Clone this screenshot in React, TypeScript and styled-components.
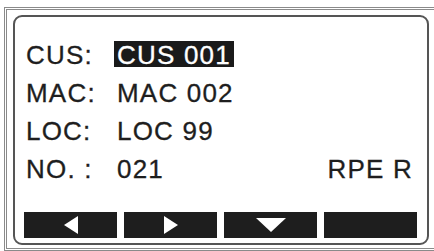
import styled, { createGlobalStyle } from 'styled-components';

const GlobalStyle = createGlobalStyle`
  html, body {
    margin: 0;
    padding: 0;
    background: #fff;
  }
  body {
    font-family: 'Liberation Sans', Arial, sans-serif;
  }
`;

const rows = [
  { label: 'CUS:', value: 'CUS 001', selected: true },
  { label: 'MAC:', value: 'MAC 002' },
  { label: 'LOC:', value: 'LOC 99' },
  { label: 'NO. :', value: '021', extra: 'RPE R' },
];

type Arrow = 'left' | 'right' | 'down' | null;
const keys: Arrow[] = ['left', 'right', 'down', null];

const ArrowIcon = ({ dir }: { dir: Arrow }) => {
  if (dir === 'left')
    return (
      <svg width="16" height="18" viewBox="0 0 16 18">
        <polygon points="15,0 15,18 1,9" fill="#fff" />
      </svg>
    );
  if (dir === 'right')
    return (
      <svg width="16" height="18" viewBox="0 0 16 18">
        <polygon points="1,0 1,18 15,9" fill="#fff" />
      </svg>
    );
  if (dir === 'down')
    return (
      <svg width="30" height="14" viewBox="0 0 30 14">
        <polygon points="0,0 30,0 15,14" fill="#fff" />
      </svg>
    );
  return null;
};

const App = () => (
  <>
    <GlobalStyle />
    <Frame>
      <Screen>
        <Rows>
          {rows.map((r) => (
            <Row key={r.label}>
              <Label>{r.label}</Label>
              <Value selected={r.selected}>{r.value}</Value>
              {r.extra && <Extra>{r.extra}</Extra>}
            </Row>
          ))}
        </Rows>
        <Keys>
          {keys.map((k, i) => (
            <Key key={i}>
              <ArrowIcon dir={k} />
            </Key>
          ))}
        </Keys>
      </Screen>
    </Frame>
  </>
);

const Frame = styled.div`
  box-sizing: border-box;
  margin: 7px 0 0 4px;
  width: 430px;
  height: 244px;
  border: 3px double #8a8a8a;
  border-right: none;
  padding: 5px 0 0 6px;
`;

const Screen = styled.div`
  box-sizing: border-box;
  width: 416px;
  height: 230px;
  border: 2px solid #555;
  border-radius: 9px;
  padding: 19px 10px 0 11px;
  display: flex;
  flex-direction: column;
`;

const Rows = styled.div`
  display: flex;
  flex-direction: column;
  color: #1e1e1e;
`;

const Row = styled.div`
  display: flex;
  align-items: baseline;
  height: 38px;
  line-height: 38px;
  font-size: 26px;
  letter-spacing: 1.2px;
  -webkit-text-stroke: 0.3px currentColor;
`;

const Label = styled.span`
  width: 91px;
  flex-shrink: 0;
`;

const Value = styled.span<{ selected?: boolean }>`
  display: inline-block;
  line-height: 23px;
  padding: 3px 3px 0;
  margin-left: -3px;
  background: ${({ selected }) => (selected ? '#1a1a1a' : 'transparent')};
  color: ${({ selected }) => (selected ? '#fff' : '#1e1e1e')};
`;

const Extra = styled.span`
  margin-left: auto;
  padding-right: 4px;
`;

const Keys = styled.div`
  margin-top: 24px;
  margin-left: -2px;
  display: flex;
  gap: 7px;
`;

const Key = styled.div`
  width: 93px;
  height: 26px;
  background: #1e1e1e;
  display: flex;
  align-items: center;
  justify-content: center;
`;

export default App;
